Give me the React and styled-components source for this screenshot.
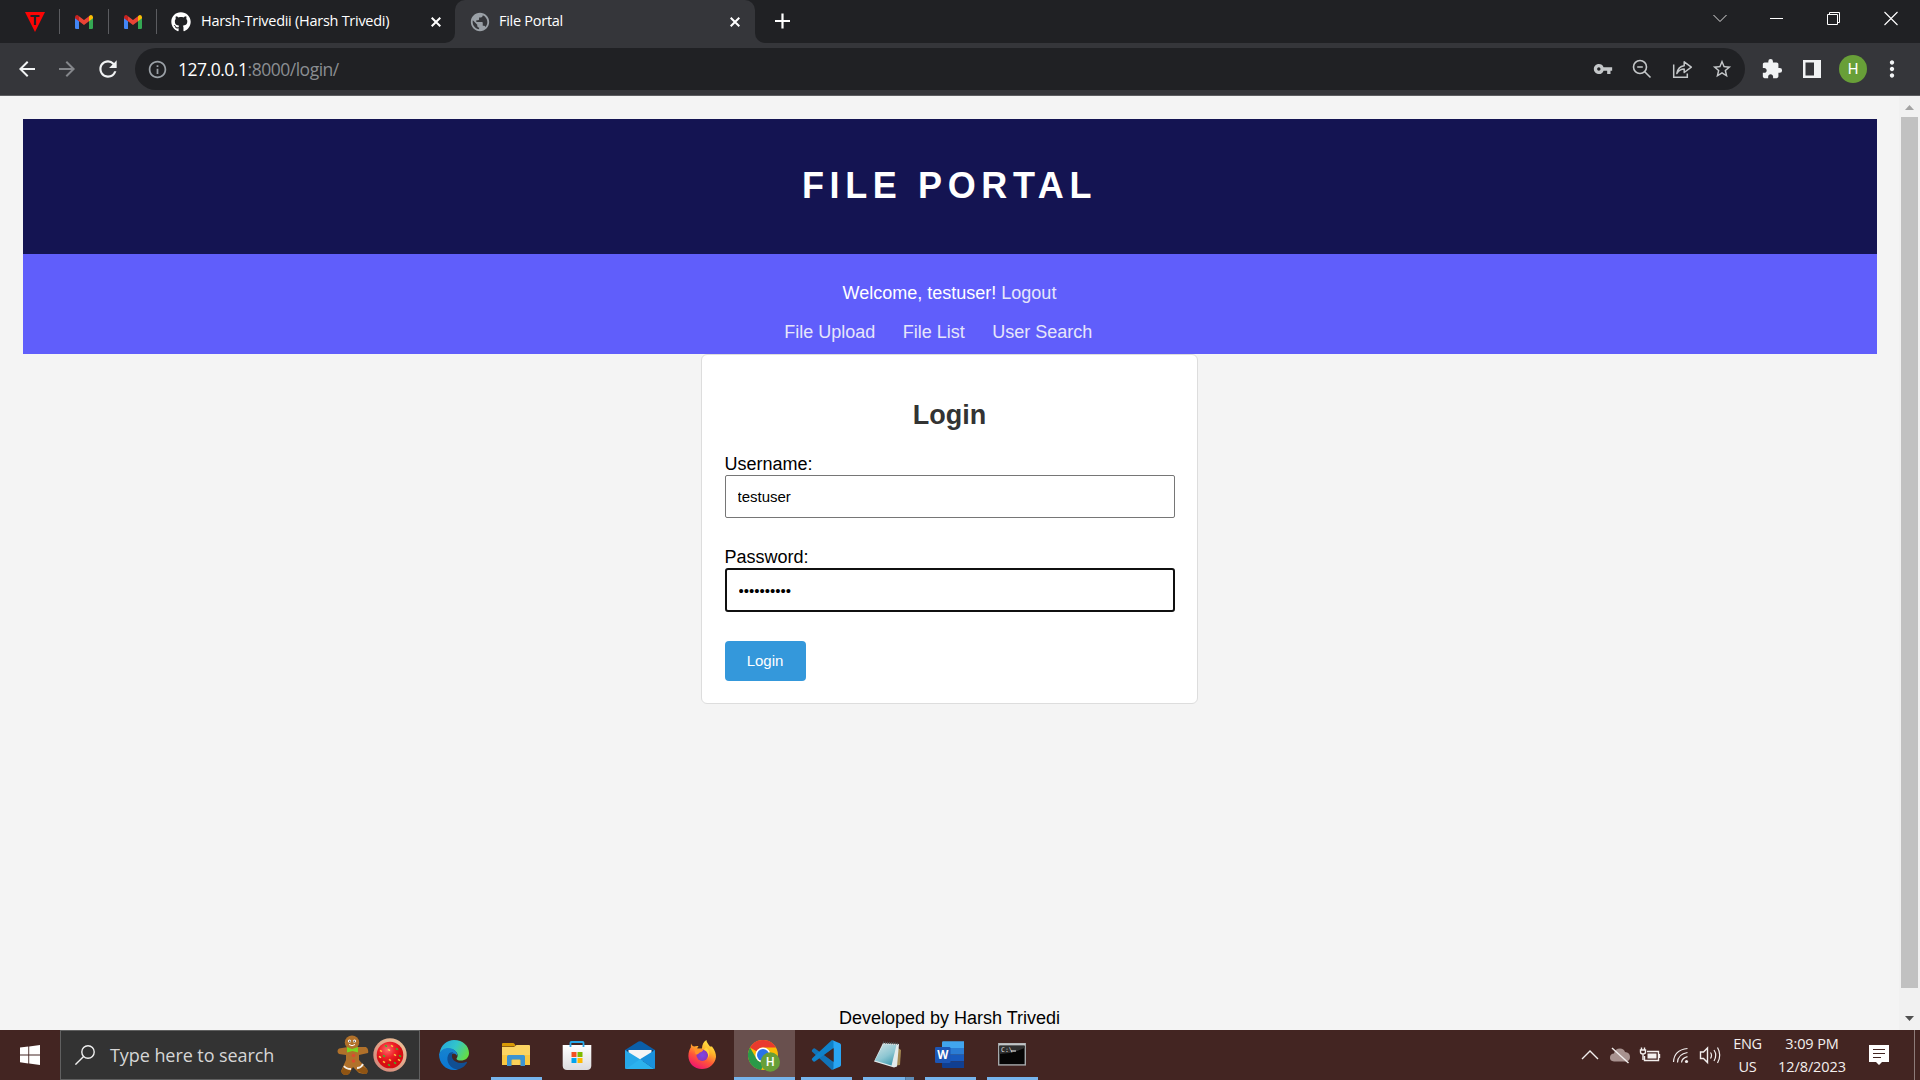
import React from "react";
import styled, { createGlobalStyle } from "styled-components";
import { FaGithub } from "react-icons/fa";
import {
  MdArrowBack,
  MdArrowForward,
  MdRefresh,
  MdInfoOutline,
  MdVpnKey,
  MdStarOutline,
  MdExtension,
  MdMoreVert,
  MdPublic,
} from "react-icons/md";

const Global = createGlobalStyle`
  * { box-sizing: border-box; }
  body { margin: 0; overflow: hidden; }
`;

const ui = `"Open Sans", "Noto Sans", sans-serif`;
const arial = `"Liberation Sans", Arial, sans-serif`;

const Screen = styled.div`
  width: 1920px;
  height: 1080px;
  display: flex;
  flex-direction: column;
  overflow: hidden;
  font-family: ${ui};
  svg { display: block; flex: none; }
`;

/* ---------- tab strip ---------- */
const TabStrip = styled.div`
  height: 43px;
  background: linear-gradient(#202124 0 20px, #35363a 20px);
  display: flex;
  color: #fff;
`;
const InactiveTabs = styled.div`
  display: flex;
  background: #202124;
  border-radius: 0 0 10px 0;
`;
const PinnedTab = styled.div`
  width: ${(p) => p.$w}px;
  padding-left: ${(p) => p.$pad}px;
  height: 25px;
  margin-top: 9px;
  border-right: 1px solid #5b5c60;
  display: flex;
  align-items: center;
`;
const Tab = styled.div`
  width: ${(p) => p.$w}px;
  height: 43px;
  padding: 0 ${(p) => (p.$active ? 15 : 14)}px 0 ${(p) => p.$pad}px;
  display: flex;
  align-items: center;
  background: ${(p) => (p.$active ? "#35363a" : "transparent")};
  border-radius: 10px 10px 0 0;
`;
const TabTitle = styled.span`
  flex: 1;
  margin-left: ${(p) => p.$ml}px;
  padding-bottom: 2px;
  font-size: 14.5px;
  line-height: 20px;
  letter-spacing: -0.27px;
  white-space: nowrap;
`;
const StripRest = styled.div`
  flex: 1;
  display: flex;
  background: #202124;
  border-radius: 0 0 0 10px;
`;
const NewTab = styled.div`
  padding: 13px 0 0 20px;
  flex: 1;
`;
const Controls = styled.div`
  display: flex;
  gap: 43px;
  padding: 11px 22px 0 0;
`;

/* ---------- toolbar ---------- */
const Toolbar = styled.div`
  height: 53px;
  background: #35363a;
  border-bottom: 1px solid #5c5d60;
  display: flex;
  align-items: center;
  color: #f1f3f4;
`;
const NavIcons = styled.div`
  width: 135px;
  padding-left: 15px;
  display: flex;
  gap: 16px;
  align-items: center;
`;
const Omnibox = styled.div`
  width: 1610px;
  height: 42px;
  border-radius: 21px;
  background: #202124;
  display: flex;
  align-items: center;
  padding: 0 12px 0 12px;
  color: #9aa0a6;
`;
const Url = styled.div`
  flex: 1;
  margin-left: 10px;
  font-size: 17.5px;
  letter-spacing: -0.48px;
  line-height: 24px;
  color: #8b8e92;
  b { font-weight: 400; color: #fff; }
`;
const OmniIcons = styled.div`
  display: flex;
  align-items: center;
  gap: 18px;
  color: #c4c7c9;
`;
const Extensions = styled.div`
  display: flex;
  align-items: center;
  padding-left: 16px;
`;
const SidePanel = styled.svg`
  margin-left: 20px;
`;
const Avatar = styled.div`
  width: 28px;
  height: 28px;
  margin: 0 12px 0 18px;
  border-radius: 50%;
  background: #689f38;
  color: #fff;
  font: 15px/28px Roboto, sans-serif;
  text-align: center;
`;

/* ---------- page ---------- */
const Viewport = styled.div`
  height: 934px;
  display: flex;
  background: #f4f4f4;
`;
const Page = styled.div`
  width: 1899px;
  padding: 23px 22px 0 23px;
  display: flex;
  flex-direction: column;
  font-family: ${arial};
  font-size: 18px;
  line-height: 21px;
  color: #000;
`;
const Header = styled.header`
  height: 135px;
  padding: 46px 1px 0 0;
  background: #141452;
  text-align: center;
`;
const Title = styled.h1`
  margin: 0;
  font-size: 36px;
  line-height: 41px;
  letter-spacing: 5.625px;
  color: #fff;
`;
const Nav = styled.nav`
  height: 100px;
  padding: 29px 1px 0 0;
  background: #605efb;
  color: #fff;
  text-align: center;
`;
const Link = styled.a`
  color: #e6e6fa;
  margin-right: ${(p) => p.$mr || 0}px;
`;
const Links = styled.div`
  margin-top: 18px;
`;
const Card = styled.main`
  width: 497px;
  height: 350px;
  margin: 0 0 0 678px;
  padding: 45px 22.5px 0;
  background: #fff;
  border: 1px solid #ddd;
  border-radius: 6px;
`;
const CardTitle = styled.h2`
  margin: 0 0 23px;
  font-size: 27px;
  line-height: 31px;
  text-align: center;
  color: #333;
`;
const Field = styled.label`
  display: block;
  margin-bottom: 29px;
`;
const Input = styled.input`
  display: block;
  width: 450px;
  height: ${(p) => (p.$focus ? 44 : 43)}px;
  padding: 0 12px;
  border: ${(p) => (p.$focus ? "2px solid #101010" : "1px solid #767676")};
  border-radius: ${(p) => (p.$focus ? 3 : 2)}px;
  outline: none;
  background: #fff;
  font: 15px ${arial};
  color: #000;
`;
const Button = styled.button`
  display: block;
  width: 81px;
  height: 40px;
  padding: 0 0 1px;
  border: 0;
  border-radius: 4px;
  background: #3498db;
  color: #fff;
  font: 15px ${arial};
`;
const Footer = styled.footer`
  margin-top: auto;
  padding: 0 1px 1px 0;
  text-align: center;
`;
const ScrollBar = styled.div`
  width: 21px;
  background: #f1f1f1;
  display: flex;
  flex-direction: column;
  align-items: center;
`;
const Thumb = styled.div`
  width: 17px;
  height: 871px;
  background: #c1c1c1;
`;
const Arrow = styled.div`
  width: 21px;
  height: ${(p) => p.$h}px;
  padding-top: ${(p) => p.$pt}px;
  padding-left: 6px;
`;

/* ---------- taskbar ---------- */
const Taskbar = styled.div`
  height: 50px;
  background: #432522;
  display: flex;
  color: #fff;
`;
const Start = styled.div`
  width: 60px;
  padding: 15px 20px;
`;
const Search = styled.div`
  width: 360px;
  height: 50px;
  border: 1px solid #606060;
  background: #333;
  display: flex;
  align-items: center;
  padding-left: 14px;
`;
const SearchText = styled.span`
  width: 227px;
  margin-left: 15px;
  font-size: 18px;
  letter-spacing: -0.07px;
  line-height: 26px;
  color: #d6d6d6;
  white-space: nowrap;
`;
const Treats = styled.div`
  display: flex;
  align-items: center;
  gap: 3px;
`;
const TaskButton = styled.div`
  width: ${(p) => (p.$on ? 61 : 51)}px;
  height: 50px;
  margin-left: ${(p) => p.$ml}px;
  padding: 10px 1px 0 0;
  display: flex;
  flex-direction: column;
  align-items: center;
  background: ${(p) => (p.$on ? "#69504e" : "transparent")};
  border-bottom: ${(p) => (p.$run ? "3px solid #76b4ec" : "0")};
  border-image: ${(p) =>
    p.$stack ? "linear-gradient(90deg,#76b4ec 0 40px,#4b7aa5 40px 41px,#5f8db8 41px) 3" : "none"};
`;
const Tray = styled.div`
  margin-left: auto;
  display: flex;
  align-items: center;
`;
const TrayText = styled.div`
  width: ${(p) => p.$w}px;
  font-size: 14.5px;
  line-height: 23px;
  letter-spacing: ${(p) => p.$ls}px;
  text-align: center;
  color: #f3efee;
  white-space: nowrap;
`;
const ShowDesktop = styled.div`
  width: 6px;
  height: 50px;
  border-left: 1px solid #8d7b79;
`;

const Gmail = () => (
  <svg width="18" height="14" viewBox="0 0 18 14">
    <path d="M0 2.5V12.8Q0 14 1.2 14H4V5.5Z" fill="#4285f4" />
    <path d="M18 2.5V12.8Q18 14 16.8 14H14V5.5Z" fill="#34a853" />
    <path d="M14 1.3V6.2L18 3.2V2Q17.6 .1 16 .1Q15.2 .1 14 1.3Z" fill="#fbbc04" />
    <path d="M4 1.3V6.2L0 3.2V2Q.4 .1 2 .1Q2.8 .1 4 1.3Z" fill="#c5221f" />
    <path d="M4 1.3L9 5.1L14 1.3V6.2L9 10L4 6.2Z" fill="#ea4335" />
  </svg>
);
const Close = () => (
  <svg width="10" height="10" viewBox="0 0 10 10" stroke="#fff" strokeWidth="2">
    <path d="M.7 .7L9.3 9.3M9.3 .7L.7 9.3" />
  </svg>
);

const Edge = () => (
  <svg width="30" height="30" viewBox="0 0 30 30">
    <defs>
      <linearGradient id="eg" x1="0" y1=".2" x2="1" y2=".6">
        <stop offset="0" stopColor="#25a7dc" />
        <stop offset=".5" stopColor="#32c5cb" />
        <stop offset="1" stopColor="#65dc45" />
      </linearGradient>
      <linearGradient id="eb" x1=".5" y1="0" x2=".4" y2="1">
        <stop offset="0" stopColor="#1784cf" />
        <stop offset="1" stopColor="#0a76d4" />
      </linearGradient>
    </defs>
    <path d="M.5 13C2 5 8 0 15 0C24 0 30 6 30 13C30 18 26 20.5 22 20.5C19 20.5 17.3 19.3 17.5 18.4C18.8 17 19 15 18 13C15 8 6 7 .5 13Z" fill="url(#eg)" />
    <path d="M0 14C3 7 12 6 16.5 11C18.5 13.4 18.2 15 17.8 15.6C16 12 11 13 10.5 19C10 24 14 28.5 19 29.4C9 32 0 25 0 14Z" fill="url(#eb)" />
    <path d="M10.2 13.2C6.5 18 8 27 18 29.6C23 28.7 26.5 25.8 28 22.5Q28 21.5 27 22C22 24.2 15.5 22.5 13.5 18.5C12.4 16 13 13.5 14.4 12.4C13 12 11.5 12.2 10.2 13.2Z" fill="#114f93" />
  </svg>
);
const Explorer = () => (
  <svg width="28" height="30" viewBox="0 0 28 30">
    <path d="M0 4Q0 3 1 3H11Q12 3 12.6 4L14 6.5H0Z" fill="#d99a05" />
    <path d="M0 7H12L14.5 5H27Q28 5 28 6V25H0Z" fill="#fcd462" />
    <path d="M0 15H28V24Q28 25 27 25H1Q0 25 0 24Z" fill="#f9c741" />
    <path d="M5 16.5Q5 15 6.5 15H21.5Q23 15 23 16.5V26H18.5V20.5Q18.5 19.5 17.5 19.5H10.5Q9.5 19.5 9.5 20.5V26H5Z" fill="#3c93d2" />
    <path d="M10.5 20H17.5V25H10.5Z" fill="#fbd15a" />
  </svg>
);
const Store = () => (
  <svg width="30" height="30" viewBox="0 0 30 30">
    <defs>
      <linearGradient id="sg" x1="0" y1="0" x2="0" y2="1">
        <stop offset="0" stopColor="#fff" />
        <stop offset="1" stopColor="#dcdcdf" />
      </linearGradient>
    </defs>
    <path d="M.7 5H29.3V26Q29 30 25 30H5Q1 30 .7 26Z" fill="url(#sg)" />
    <path d="M8.5 7V2.8Q8.5 2 9.3 2H20.7Q21.5 2 21.5 2.8V7" fill="none" stroke="#27a8ea" strokeWidth="1.8" />
    <path d="M9.5 12H14.5V17H9.5Z" fill="#f25022" />
    <path d="M15.5 12H20.5V17H15.5Z" fill="#7fba00" />
    <path d="M9.5 18H14.5V23H9.5Z" fill="#00a4ef" />
    <path d="M15.5 18H20.5V23H15.5Z" fill="#ffb900" />
  </svg>
);
const Mail = () => (
  <svg width="30" height="30" viewBox="0 0 30 30">
    <path d="M0 10L13.5 1.6Q15 .8 16.5 1.6L30 10V12H0Z" fill="#0b5fa9" />
    <path d="M2 10H28V21H2Z" fill="#123b63" />
    <path d="M3.5 10H26.5V14L15 23L3.5 14Z" fill="#f5f5f5" />
    <path d="M0 10L15 19.3L29 29H1Q0 29 0 28Z" fill="#27a8e8" />
    <path d="M1 29L15 19.3L29 29Z" fill="#2cb2ee" />
    <path d="M30 10V28Q30 29 29 29L15 19.3Z" fill="#1a91dc" />
  </svg>
);
const Firefox = () => (
  <svg width="28" height="30" viewBox="0 0 28 30">
    <defs>
      <linearGradient id="fg" x1=".8" y1="0" x2=".3" y2="1">
        <stop offset="0" stopColor="#fff14d" />
        <stop offset=".35" stopColor="#ffb52a" />
        <stop offset=".65" stopColor="#ff5638" />
        <stop offset="1" stopColor="#ef1272" />
      </linearGradient>
      <radialGradient id="fp">
        <stop offset="0" stopColor="#7a48e8" />
        <stop offset="1" stopColor="#8b36b8" />
      </radialGradient>
    </defs>
    <path d="M3 3.5C3.5 5 4.5 6 6 6.6Q8 5.6 10.5 6L9 8.5H14C14 5 15.5 1.5 18.4 0C18.5 2.6 20.5 4.2 22 6.6L24 6.5C27 10 28 14 28 17C27 24.5 21 29 14 29C6 29 .4 23 .4 16C.4 12 1.5 9.5 2.8 7.5Z" fill="url(#fg)" />
    <circle cx="14.3" cy="15.2" r="5.8" fill="url(#fp)" />
    <path d="M6 8C9 8 10 9.5 15.5 9.4C15 11.5 12.5 12 11.4 12.8C10.5 14 9 15 7.5 14Z" fill="#ff9328" />
    <path d="M16 10C19 11 21 14 19.8 18C22 15 22 10 18 7Z" fill="#ffd33e" />
  </svg>
);
const Chrome = () => (
  <svg width="32" height="34" viewBox="0 0 32 34">
    <circle cx="15" cy="15" r="15" fill="#fbbc05" />
    <path d="M2 7.5A15 15 0 0 1 28 7.5H15A7.5 7.5 0 0 0 8.5 11.3Z" fill="#e93a2e" />
    <path d="M2 7.5L8.5 18.8A7.5 7.5 0 0 0 17 22.2L13 30A15 15 0 0 1 2 7.5Z" fill="#2a9a48" />
    <circle cx="15" cy="15" r="7.6" fill="#fff" />
    <circle cx="15" cy="15" r="6" fill="#2a73e8" />
    <circle cx="22.3" cy="22" r="9.7" fill="#689f38" />
    <text x="22.3" y="26.2" fontSize="12" fontWeight="500" fontFamily="Roboto" fill="#fff" textAnchor="middle">H</text>
  </svg>
);
const VSCode = () => (
  <svg width="30" height="30" viewBox="0 0 30 30">
    <path d="M21 30L2 12.5Q0 11 1 10L2.5 8.6Q3.3 8 4.3 8.7L28 26Z" fill="#1173b8" />
    <path d="M21 0L2 17.5Q0 19 1 20L2.5 21.4Q3.3 22 4.3 21.3L28 4Z" fill="#0f82cb" />
    <path d="M21.5 .2L28.8 3.2Q30 3.8 30 5V25Q30 26.2 28.8 26.8L21.5 29.8Q22.5 29 22.5 27.5V2.5Q22.5 1 21.5 .2Z" fill="#29a5f3" />
    <path d="M22.5 8.5V21.5L14 15Z" fill="#432522" />
  </svg>
);
const Notepad = () => (
  <svg width="30" height="30" viewBox="0 0 30 30">
    <defs>
      <linearGradient id="ng" x1=".2" y1="0" x2=".8" y2="1">
        <stop offset="0" stopColor="#c9e0e3" />
        <stop offset=".55" stopColor="#8cc6d2" />
        <stop offset="1" stopColor="#3d98ad" />
      </linearGradient>
    </defs>
    <path d="M22 6L28 10L27 25L20 26Z" fill="#a58a53" />
    <path d="M10 3L26 4L24 26.5L21 27.5L1 21.5Z" fill="#e4ebec" />
    <path d="M10.5 4L23.5 5L18.5 25.5L1.8 20.5Z" fill="url(#ng)" />
    <path d="M10 2.5L26 3.8" stroke="#4e5658" strokeWidth="2" strokeDasharray="1 1" />
  </svg>
);
const Word = () => (
  <svg width="30" height="30" viewBox="0 0 30 30">
    <path d="M7 2.5Q7 1.3 8.2 1.3H29V8H7Z" fill="#41a5ee" />
    <path d="M7 8H29V14.7H7Z" fill="#2b7cd3" />
    <path d="M7 14.7H29V21.4H7Z" fill="#185abd" />
    <path d="M7 21.4H29V28H8.2Q7 28 7 27Z" fill="#103f91" />
    <rect x="0" y="7" width="15.5" height="16" rx="1.3" fill="#1c56b5" />
    <text x="7.7" y="18.8" fontSize="11.5" fontWeight="700" fontFamily="Open Sans" fill="#fff" textAnchor="middle">W</text>
  </svg>
);
const Cmd = () => (
  <svg width="28" height="30" viewBox="0 0 28 30">
    <rect x=".7" y="3.7" width="26.6" height="21.2" fill="#050505" stroke="#a5a9ab" strokeWidth="1.4" />
    <path d="M1 4.5H27" stroke="#c2c5c7" strokeWidth="2" />
    <path d="M1.5 6V14Q14 14 26.5 8V6Z" fill="#303030" />
    <text x="3" y="12" fontSize="6.500" fontFamily="DejaVu Sans Mono" fill="#ddd">C:\</text>
    <path d="M13 11H18" stroke="#eee" />
  </svg>
);

const Gingerbread = () => (
  <svg width="33" height="40" viewBox="0 0 33 40">
    <g fill="#b1712a">
      <ellipse cx="15" cy="7.500" rx="7.200" ry="7" />
      <path d="M11 12H19L29 12Q32 14 31 18L22 20L22 25L30 34Q32 39 27 39L22 38L16 32L12 39Q6 42 4 36L9 25V20L2 19Q-1 16 2 13.500Z" />
    </g>
    <path d="M4 36Q6 42 12 39L13.500 36L7 32ZM23 30L30 34Q32 39 27 39L20 36Z" fill="#8f5413" />
    <path d="M7 31Q9 34 14 34M20 33Q24 33 26 29" stroke="#f4eee6" strokeWidth="1.800" fill="none" />
    <circle cx="12.500" cy="6" r="1.600" fill="#fff" />
    <circle cx="17.500" cy="6" r="1.600" fill="#fff" />
    <circle cx="12.800" cy="6.300" r=".7" fill="#333" />
    <circle cx="17.200" cy="6.300" r=".7" fill="#333" />
    <path d="M12 9.500Q15 12 18 9.500" stroke="#fff" fill="none" />
    <path d="M10 12L15 14L21 12V17.500L15.500 16L10 17.500Z" fill="#79d622" />
    <circle cx="16.500" cy="20.500" r="1.700" fill="#dc4b2f" />
    <circle cx="16.500" cy="26" r="1.700" fill="#dc4b2f" />
  </svg>
);
const sprinkles = [
  [13, 8, "#35bd29"], [19, 8, "#ffc640"], [24, 11, "#35bd29"], [8, 13, "#ffc640"], [16, 12, "#ffd85c"],
  [11, 18, "#35bd29"], [22, 17, "#ffc640"], [27, 18, "#35bd29"], [17, 22, "#ffc640"], [11, 24, "#ffc640"],
  [22, 25, "#35bd29"], [16, 27, "#35bd29"], [26, 22, "#ffc640"], [7, 19, "#ffd85c"],
];
const Cookie = () => (
  <svg width="34" height="34" viewBox="0 0 34 34">
    <defs>
      <linearGradient id="cg" x1="1" y1="0" x2="0" y2="1">
        <stop offset="0" stopColor="#f0c79a" />
        <stop offset="1" stopColor="#d08077" />
      </linearGradient>
      <radialGradient id="cr" cx=".4" cy=".3">
        <stop offset="0" stopColor="#ff6b6b" />
        <stop offset=".6" stopColor="#ee2027" />
        <stop offset="1" stopColor="#d70d12" />
      </radialGradient>
    </defs>
    <circle cx="17" cy="17" r="16.700" fill="url(#cg)" />
    <circle cx="17" cy="17" r="13.300" fill="url(#cr)" />
    {sprinkles.map(([x, y, c], i) => (
      <path key={i} d={`M${x - 1} ${y - 0.7}L${x + 1} ${y + 0.7}`} stroke={c} strokeWidth="1.500" />
    ))}
  </svg>
);

const apps = [
  { icon: Edge, ml: 9 },
  { icon: Explorer, ml: 11, run: true },
  { icon: Store, ml: 10 },
  { icon: Mail, ml: 12 },
  { icon: Firefox, ml: 11 },
  { icon: Chrome, ml: 6, run: true, on: true },
  { icon: VSCode, ml: 6, run: true },
  { icon: Notepad, ml: 11, run: true, stack: true },
  { icon: Word, ml: 11, run: true },
  { icon: Cmd, ml: 11, run: true },
];

const WindowTabs = () => (
  <TabStrip>
    <InactiveTabs>
      <PinnedTab $w={60} $pad={25}>
        <svg width="20" height="20" viewBox="0 0 20 20">
          <path d="M0 0H20L10 20Z" fill="#fb0505" />
          <path d="M5.500 4H14.500M10 4V13" stroke="#202124" strokeWidth="2.200" />
        </svg>
      </PinnedTab>
      <PinnedTab $w={49} $pad={15}><Gmail /></PinnedTab>
      <PinnedTab $w={48} $pad={15}><Gmail /></PinnedTab>
      <Tab $w={298} $pad={14}>
        <FaGithub size={20} />
        <TabTitle $ml={10}>Harsh-Trivedii (Harsh Trivedi)</TabTitle>
        <Close />
      </Tab>
    </InactiveTabs>
    <Tab $active $w={300} $pad={14}>
      <MdPublic size={22} color="#9aa0a6" />
      <TabTitle $ml={8}>File Portal</TabTitle>
      <Close />
    </Tab>
    <StripRest>
      <NewTab>
        <svg width="15" height="16" viewBox="0 0 15 16" stroke="#fff" strokeWidth="2.200">
          <path d="M7.500 .5V15.500M0 8H15" />
        </svg>
      </NewTab>
      <Controls>
        <svg width="14" height="16" viewBox="0 0 14 16" fill="none" stroke="#ddd" strokeWidth="1"><path d="M.5 4L7 10.500L13.500 4" /></svg>
        <svg width="14" height="16" viewBox="0 0 14 16" stroke="#fff"><path d="M0 7.500H13" /></svg>
        <svg width="14" height="16" viewBox="0 0 14 16" fill="none" stroke="#fff"><path d="M.5 3.500H10.500V13.500H.5ZM2.500 3.500V1.500H12.500V11.500H10.500" /></svg>
        <svg width="14" height="16" viewBox="0 0 14 16" stroke="#fff" strokeWidth="1.100"><path d="M.5 1L13.500 14M13.500 1L.5 14" /></svg>
      </Controls>
    </StripRest>
  </TabStrip>
);

export default function App() {
  return (
    <Screen>
      <Global />
      <WindowTabs />
      <Toolbar>
        <NavIcons>
          <MdArrowBack size={24} />
          <MdArrowForward size={24} color="#85878b" />
          <MdRefresh size={26} />
        </NavIcons>
        <Omnibox>
          <MdInfoOutline size={21} />
          <Url><b>127.0.0.1</b>:8000/login/</Url>
          <OmniIcons>
            <MdVpnKey size={20} />
            <svg width="22" height="22" viewBox="0 0 22 22" fill="none" stroke="currentColor" strokeWidth="1.600">
              <circle cx="9" cy="9" r="6.500" />
              <path d="M13.500 13.500L19.500 19.500M6.200 9H11.800" />
            </svg>
            <svg width="22" height="22" viewBox="0 0 22 22" fill="none" stroke="currentColor" strokeWidth="1.500">
              <path d="M2.700 6.500V19.300H16.300V15.500" />
              <path d="M5.800 15.500C6.500 11 9 8.200 13.200 7.700V3.800L20.300 9.200L13.200 14.500V11C10 11 7.800 12.300 5.800 15.500Z" strokeLinejoin="round" />
            </svg>
            <MdStarOutline size={22} />
          </OmniIcons>
        </Omnibox>
        <Extensions>
          <MdExtension size={22} />
          <SidePanel width="18" height="18" viewBox="0 0 18 18">
            <path d="M0 0H18V18H0ZM2.500 2.500V15.500H11V2.500Z" fill="#f1f3f4" fillRule="evenodd" />
          </SidePanel>
          <Avatar>H</Avatar>
          <MdMoreVert size={26} />
        </Extensions>
      </Toolbar>

      <Viewport>
        <Page>
          <Header><Title>FILE PORTAL</Title></Header>
          <Nav>
            <div>Welcome, testuser! <Link>Logout</Link></div>
            <Links>
              <Link $mr={22.5}>File Upload</Link> <Link $mr={22.5}>File List</Link>{" "}
              <Link $mr={22.5}>User Search</Link>
            </Links>
          </Nav>
          <Card>
            <CardTitle>Login</CardTitle>
            <Field>
              Username:
              <Input defaultValue="testuser" />
            </Field>
            <Field>
              Password:
              <Input $focus type="password" defaultValue="abcdefghij" />
            </Field>
            <Button>Login</Button>
          </Card>
          <Footer>Developed by Harsh Trivedi</Footer>
        </Page>
        <ScrollBar>
          <Arrow $h={21} $pt={9}>
            <svg width="9" height="5" viewBox="0 0 9 5"><path d="M0 5L4.500 0L9 5Z" fill="#a3a3a3" /></svg>
          </Arrow>
          <Thumb />
          <Arrow $h={42} $pt={28}>
            <svg width="9" height="5" viewBox="0 0 9 5"><path d="M0 0H9L4.500 5Z" fill="#505050" /></svg>
          </Arrow>
        </ScrollBar>
      </Viewport>

      <Taskbar>
        <Start>
          <svg width="20" height="20" viewBox="0 0 20 20" fill="#fff">
            <path d="M0 2.600L8.300 1.500V9.400H0ZM9.200 1.400L20 0V9.400H9.200ZM0 10.400H8.300V18.400L0 17.300ZM9.200 10.400H20V20L9.200 18.500Z" />
          </svg>
        </Start>
        <Search>
          <svg width="20" height="20" viewBox="0 0 20 20" fill="none" stroke="#f0f0f0" strokeWidth="1.400">
            <circle cx="13" cy="7" r="6.200" />
            <path d="M8.600 11.400L.4 19.600" />
          </svg>
          <SearchText>Type here to search</SearchText>
          <Treats>
            <Gingerbread />
            <Cookie />
          </Treats>
        </Search>
        {apps.map(({ icon: Icon, ml, run, on, stack }, i) => (
          <TaskButton key={i} $ml={ml} $run={run} $on={on} $stack={stack}><Icon /></TaskButton>
        ))}
        <Tray>
          <svg width="145" height="50" viewBox="1578 1030 145 50" fill="none" stroke="#f3efee" strokeWidth="1.400">
            <path d="M1582 1059L1590 1051L1598 1059" />
            <path d="M1614 1061.500Q1609.500 1061 1610 1057Q1610.500 1053.500 1614 1053.500Q1615 1048.500 1620 1048.500Q1624 1048.500 1625 1052Q1630 1052.500 1630 1057Q1630 1061 1626 1061.500Z" fill="#a8928f" stroke="none" />
            <path d="M1612 1048L1628.500 1063" />
            <path d="M1647 1051.500H1658.500V1060.500H1644.500V1056M1659.500 1054V1058" />
            <path d="M1647.500 1053.500H1656.500V1058.500H1647.500Z" fill="#f3efee" stroke="none" />
            <path d="M1640.500 1050H1645.500V1052Q1645.500 1054 1643 1054Q1640.500 1054 1640.500 1052ZM1641.500 1047.500V1050M1644.500 1047.500V1050M1643 1054V1060" />
            <path d="M1673.500 1062Q1674 1050 1687.500 1048.500M1677.500 1062.500Q1678 1054 1687.500 1052.500M1681.500 1062.500Q1682 1058 1687.500 1056.700" strokeWidth="1.200" />
            <circle cx="1686.500" cy="1061.500" r="1.600" fill="#f3efee" stroke="none" />
            <path d="M1700.500 1052H1703.500L1707.500 1048V1062.500L1703.500 1058.500H1700.500Z" />
            <path d="M1710.500 1052.500Q1712.500 1055.200 1710.500 1058.500M1714 1050Q1717.500 1055.200 1714 1061M1717.500 1047.500Q1722 1055.200 1717.500 1063" strokeWidth="1.200" />
          </svg>
          <TrayText $w={49} $ls={-0.3}>ENG<br />US</TrayText>
          <TrayText $w={80} $ls={-0.1}>3:09 PM<br />12/8/2023</TrayText>
          <svg width="62" height="50" viewBox="1852 1030 62 50">
            <path d="M1869 1045H1889V1062H1882L1879 1065L1876 1062H1869Z" fill="#fff" />
            <path d="M1873 1049.500H1885M1873 1053.500H1885M1873 1057.500H1881" stroke="#432522" strokeWidth="1.200" />
          </svg>
          <ShowDesktop />
        </Tray>
      </Taskbar>
    </Screen>
  );
}
